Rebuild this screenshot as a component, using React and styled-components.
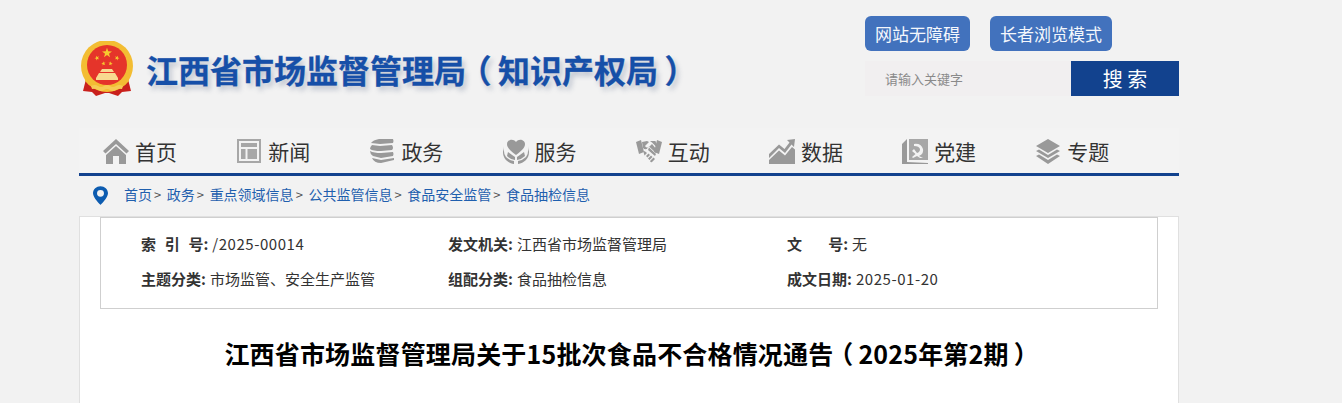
import React from "react";
import styled, { createGlobalStyle } from "styled-components";

const Global = createGlobalStyle`
  html, body { margin: 0; padding: 0; height: 403px; overflow: hidden; background: #f2f2f2; }
  body { font-family: "Noto Sans CJK SC", "Liberation Sans", sans-serif; color: #333; }
  * { box-sizing: border-box; }
`;

const Page = styled.div`
  width: 1100px;
  margin-left: 79px;
`;

const Header = styled.header`
  height: 128px;
  display: flex;
  justify-content: space-between;
`;

const Brand = styled.div`
  display: flex;
  align-items: center;
  height: 116px;
  padding-top: 22px;
`;

const SiteTitle = styled.h1`
  margin: 0 0 0 11px;
  font-size: 32px;
  line-height: 44px;
  font-weight: 700;
  color: #164fa8;
  white-space: nowrap;
  text-shadow: 3px 4px 5px rgba(60, 80, 120, 0.28);
  -webkit-text-stroke: 0.3px #164fa8;
`;

const Paren = styled.span`
  display: inline-block;
  width: 1em;
  text-align: center;
  font-feature-settings: "palt";
`;

const Tools = styled.div`
  width: 314px;
  padding-top: 16px;
  display: flex;
  flex-direction: column;
  gap: 10px;
`;

const ToolRow = styled.div`
  display: flex;
  gap: 20px;
`;

const ToolButton = styled.a`
  height: 35px;
  padding: 0 10px;
  display: flex;
  align-items: center;
  border-radius: 6px;
  background: #4272bd;
  color: #f4f7fc;
  font-size: 17px;
`;

const SearchBar = styled.div`
  display: flex;
  height: 35px;
`;

const SearchField = styled.div`
  flex: 1;
  background: #f1eff0;
  color: #8a8a8a;
  font-size: 13px;
  padding-left: 20px;
  display: flex;
  align-items: center;
`;

const SearchButton = styled.button`
  width: 108px;
  border: 0;
  padding: 0;
  background: #12428e;
  color: #fff;
  font-family: inherit;
  font-size: 20px;
`;

const Nav = styled.nav`
  height: 48px;
  display: flex;
  padding-left: 24px;
  border-bottom: 3px solid #12428e;
  background: #f3f3f3;
`;

const NavItem = styled.a`
  width: 133.2px;
  height: 45px;
  display: flex;
  align-items: center;
  gap: 6px;
  font-size: 21px;
  color: #333;
  svg { flex: none; width: 26px; height: 26px; fill: #999; }
`;

const Crumbs = styled.div`
  height: 40px;
  padding: 0 0 4px 14px;
  display: flex;
  align-items: center;
  svg { flex: none; width: 15px; height: 19px; margin-right: 16px; margin-top: 3px; }
`;

const Crumb = styled.a`
  font-size: 14px;
  color: #1f5fae;
  margin-right: 5.6px;
  &:last-child { margin-right: 0; }
`;

const Sep = styled.span`
  margin-left: 2px;
  color: #555;
  font-size: 13px;
`;

const Card = styled.main`
  background: #fff;
  border: 1px solid #e0e0e0;
  height: 300px;
  padding: 0 20px;
`;

const InfoBox = styled.div`
  height: 92px;
  border: 1px solid #cfcfcf;
  padding: 8px 0 0 40px;
  display: grid;
  grid-template-columns: 307px 339px 1fr;
  grid-auto-rows: 35px;
  align-items: center;
  font-size: 15px;
  color: #333;
`;

const Cell = styled.div`
  white-space: nowrap;
  b { font-weight: 700; margin-right: 4px; white-space: pre; word-spacing: -0.5px; }
`;

const Value = styled.span`
  letter-spacing: ${(p) => (p.$numeric ? "0.55px" : "0")};
`;

const ArticleTitle = styled.h2`
  margin: 24px 0 0;
  font-size: 25px;
  line-height: 40px;
  font-weight: 700;
  letter-spacing: 0.18px;
  color: #000;
  text-align: center;
  white-space: nowrap;
`;

const starPath = (cx, cy, r, rot = 0) => {
  let d = "";
  for (let i = 0; i < 10; i++) {
    const rad = i % 2 ? r * 0.4 : r;
    const a = -Math.PI / 2 + (i * Math.PI) / 5 + rot;
    d += `${i ? "L" : "M"}${(cx + rad * Math.cos(a)).toFixed(2)} ${(cy + rad * Math.sin(a)).toFixed(2)} `;
  }
  return d + "Z";
};

const Emblem = () => (
  <svg width="56" height="56" viewBox="0 0 56 56" style={{ flex: "none" }}>
    <path d="M7 38 L4 50 L13 51 L17 55 L26 52 L30 52 L39 55 L43 51 L52 50 L49 38 Z" fill="#c9201c" />
    <circle cx="28" cy="25" r="26" fill="#f3bd33" />
    <circle cx="28" cy="24" r="20" fill="#e5342a" />
    <path d={starPath(28, 12, 5.2)} fill="#f6c92f" />
    <path d={starPath(18, 17, 2.5, -0.4)} fill="#f6c92f" />
    <path d={starPath(38, 17, 2.5, 0.4)} fill="#f6c92f" />
    <path d={starPath(24.5, 22.5, 2.3, -0.2)} fill="#f6c92f" />
    <path d={starPath(31.5, 22.5, 2.3, 0.2)} fill="#f6c92f" />
    <path d="M23 28 H33 L35 31 H21 Z M20 32 H36 L39 37 V39 H17 V37 Z" fill="#f8d98f" />
    <path d="M8 33 Q14 45 28 46 Q42 45 48 33 L50 40 Q42 50 28 50 Q14 50 6 40 Z" fill="#f3bd33" />
    <path d="M12 45 q4 -2 7 0 q3 2 6 0 q3 -2 6 0 q3 2 6 0 q3 -2 7 0 l-1 3 q-4 -1 -6 1 q-3 2 -6 0 q-3 -2 -6 0 q-3 2 -6 0 q-2 -2 -6 -1 Z" fill="#f6cc55" />
  </svg>
);

const Home = () => (
  <svg viewBox="0 0 26 26"><path d="M13 1 L26 13 L23.5 15.5 L13 6 L2.5 15.5 L0 13 Z M13 8 L23 17 V26 H16 V18 H10 V26 H3 V17 Z" /></svg>
);
const News = () => (
  <svg viewBox="0 0 26 26"><path fillRule="evenodd" d="M1 1 H25 V25 H1 Z M3 3 V23 H23 V3 Z M5 5 H21 V9 H5 Z M5 11 H9.5 V21 H5 Z M11.5 11 H21 V21 H11.5 Z" opacity=".85" /></svg>
);
const Books = () => (
  <svg viewBox="0 0 26 26"><path d="M10 1 L24 1 Q25 3 24 5 L11 6 L2 5 Q4 2 10 1 Z M3 7 L11 8 L23 7 Q25 10 23 12 L12 13 Q4 13 1 11 Q1 9 3 7 Z M1 13 Q5 15 12 15 L24 14 Q25 16 24 18 L12 20 L4 18 Q1 16 1 13 Z M3 20 L12 22 L25 20 L25 22 L12 25 Q5 25 3 20 Z" /></svg>
);
const Care = () => (
  <svg viewBox="0 0 26 26"><path d="M13 17 C6 12 4 9 4 6 C4 2 10 0 13 4 C16 0 22 2 22 6 C22 9 20 12 13 17 Z M1 8 Q0 15 3 19 Q6 22 11 23 V26 C5 25 0 21 0 14 Z M25 8 Q26 15 23 19 Q20 22 15 23 V26 C21 25 26 21 26 14 Z M5 14 Q9 17 12 19 V22 Q7 21 4 18 Z M21 14 Q17 17 14 19 V22 Q19 21 22 18 Z" /></svg>
);
const Hands = () => (
  <svg viewBox="0 0 26 26">
    <path d="M0 4 L5 2 L8 14 L3 16 Z" />
    <path d="M21 2 L26 4 L23 16 L18 14 Z" />
    <path d="M6 4 L11 3 L13 4 L9 8 Q11 11 14 8 L16 6 L21 12 L20 15 L13 8.5 Q10 13 7 10 Z" />
    <path d="M14 3 L19.5 3 L21.5 10 L16 4.5 Z" />
    <path d="M7.5 14 L8.5 13 L11 15 L8.5 17.5 Z M10 18 L12.5 15.5 L14 17 L11.5 19.5 Z M12 20.5 L15 17.5 L16.5 19 L13.5 22 Z M14 23 L17.5 19.5 L19 21 L16 24 Q15 25 14 23 Z M13 9.5 L20 16 L19 18 L12 12 Z" />
  </svg>
);
const Chart = () => (
  <svg viewBox="0 0 26 26"><path d="M26 1 L25 9 L22.5 6.5 L16 15 L10 10 L0 20 V16 L10 6.5 L15.5 11 L20.5 4.5 L18 2 Z M0 22 L10 12.5 L16 17.5 L23 9 L26 11.5 V26 H0 Z" /></svg>
);
const Party = () => (
  <svg viewBox="0 0 26 26"><path fillRule="evenodd" d="M7 1 H26 V22 H7 Z M12 6 Q19 5 21 11 Q22 16 17 18 L21 20 L18 20 L15 18 L11 20 L10 19 L13.5 16 L10 13 L12 11 L15 15 Q18 14 18 11 Q17 8 12 8 Z" opacity=".85" /><path d="M5 1 V24 L26 25 V26 H0 V6 Z" /></svg>
);
const Layers = () => (
  <svg viewBox="0 0 26 26"><path d="M13 1 L25 8 L13 15 L1 8 Z M4 11.5 L13 17 L22 11.5 L25 13 L13 20 L1 13 Z M4 16.5 L13 22 L22 16.5 L25 18 L13 26 L1 18 Z" /></svg>
);

const Pin = () => (
  <svg viewBox="0 0 16 20"><path fillRule="evenodd" fill="#0d5cb0" d="M8 0 C3.6 0 0 3.3 0 7.6 C0 12.5 8 20 8 20 C8 20 16 12.5 16 7.6 C16 3.3 12.4 0 8 0 Z M8 4 A3.7 3.7 0 1 1 8 11.4 A3.7 3.7 0 1 1 8 4 Z" /></svg>
);

const navItems = [
  ["首页", Home], ["新闻", News], ["政务", Books], ["服务", Care],
  ["互动", Hands], ["数据", Chart], ["党建", Party], ["专题", Layers],
];

const crumbs = ["首页", "政务", "重点领域信息", "公共监管信息", "食品安全监管"];

const info = [
  ["索   引   号:", "/2025-00014", true], ["发文机关:", "江西省市场监督管理局"], ["文         号:", "无"],
  ["主题分类:", "市场监管、安全生产监管"], ["组配分类:", "食品抽检信息"], ["成文日期:", "2025-01-20", true],
];

export default function App() {
  return (
    <Page>
      <Global />
      <Header>
        <Brand>
          <Emblem />
          <SiteTitle>江西省市场监督管理局<Paren>（</Paren>知识产权局<Paren>）</Paren></SiteTitle>
        </Brand>
        <Tools>
          <ToolRow>
            <ToolButton>网站无障碍</ToolButton>
            <ToolButton>长者浏览模式</ToolButton>
          </ToolRow>
          <SearchBar>
            <SearchField>请输入关键字</SearchField>
            <SearchButton>搜 索</SearchButton>
          </SearchBar>
        </Tools>
      </Header>
      <Nav>
        {navItems.map(([label, Icon]) => (
          <NavItem key={label}><Icon />{label}</NavItem>
        ))}
      </Nav>
      <Crumbs>
        <Pin />
        {crumbs.map((c) => (
          <Crumb key={c}>{c}<Sep>&gt;</Sep></Crumb>
        ))}
        <Crumb>食品抽检信息</Crumb>
      </Crumbs>
      <Card>
        <InfoBox>
          {info.map(([k, v, numeric]) => (
            <Cell key={k}><b>{k}</b><Value $numeric={numeric}>{v}</Value></Cell>
          ))}
        </InfoBox>
        <ArticleTitle>江西省市场监督管理局关于15批次食品不合格情况通告<Paren>（</Paren>2025年第2期<Paren>）</Paren></ArticleTitle>
      </Card>
    </Page>
  );
}
